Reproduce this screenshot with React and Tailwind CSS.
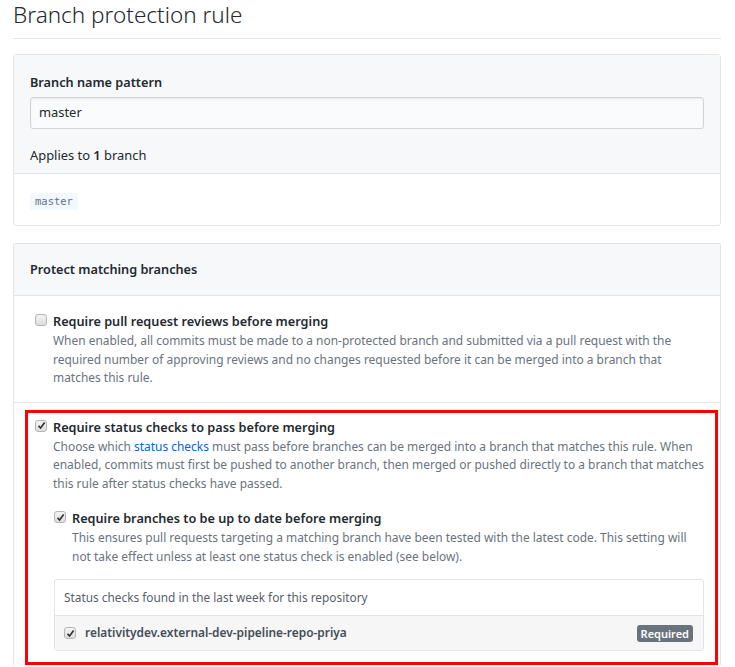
import React from 'react';

const Checkbox = ({ checked }) => (
  <span className="mt-[4px] flex h-[12px] w-[12px] shrink-0 items-center justify-center rounded-[3px] border border-[#b5b5b5] bg-gradient-to-b from-[#f4f4f4] to-[#dedede]">
    {checked && (
      <svg width="9" height="9" viewBox="0 0 9 9">
        <path d="M1.5 4.8 L3.6 7 L7.6 1.6" fill="none" stroke="#333" strokeWidth="1.7" />
      </svg>
    )}
  </span>
);

const Option = ({ checked, title, children, className = '' }) => (
  <div className={`flex gap-[6px] ${className}`}>
    <Checkbox checked={checked} />
    <div className="min-w-0 flex-1">
      <div className="text-[12.7px] leading-[22px] font-semibold text-[#24292e]">{title}</div>
      <p className="text-[11.95px] leading-[18.5px] text-[#6a737d]">{children}</p>
    </div>
  </div>
);

export default function App() {
  return (
    <div className="min-h-screen bg-white pl-[13px] pr-[14px] font-['Segoe_UI','Noto_Sans',sans-serif] text-[#24292e]">
      <h1 className="border-b border-[#e1e4e8] pb-[8px] text-[22.5px] leading-[30px] font-light">
        Branch protection rule
      </h1>

      <div className="mt-[15px] rounded-[3px] border border-[#e1e4e8]">
        <div className="border-b border-[#e1e4e8] bg-[#f6f8fa] px-[16px] pt-[17px] pb-[7px]">
          <div className="text-[12.7px] leading-[21px] font-semibold">Branch name pattern</div>
          <div className="mt-[4px] flex h-[32px] items-center rounded-[3px] border border-[#d1d5da] bg-[#fafbfc] px-[8px] text-[12.9px] shadow-[inset_0_1px_2px_rgba(27,31,35,0.075)]">
            master
          </div>
          <div className="mt-[16px] text-[12.9px] leading-[21px]">
            Applies to <span className="font-semibold">1</span> branch
          </div>
        </div>
        <div className="px-[16px] pt-[19px] pb-[15px]">
          <code className="block w-fit rounded-[3px] bg-[#f1f8ff] px-[5px] font-['DejaVu_Sans_Mono',monospace] text-[10.5px] leading-[17px] text-[#6a737d]">
            master
          </code>
        </div>
      </div>

      <div className="mt-[17px] rounded-t-[3px] border border-b-0 border-[#e1e4e8]">
        <div className="border-b border-[#e1e4e8] bg-[#f6f8fa] px-[16px] py-[15px] text-[12.7px] leading-[21px] font-semibold">
          Protect matching branches
        </div>

        <div className="border-b border-[#e1e4e8] pt-[14px] pr-[16px] pb-[14px] pl-[21px]">
          <Option checked={false} title="Require pull request reviews before merging">
            When enabled, all commits must be made to a non-protected branch and submitted via a pull request with the
            <br />
            required number of approving reviews and no changes requested before it can be merged into a branch that
            <br />
            matches this rule.
          </Option>
        </div>

        <div className="mt-[7px] mr-[2px] ml-[11px] border-[3px] border-[#ff0000] pt-[3px] pr-[11px] pb-[11px] pl-[7px]">
          <Option checked title="Require status checks to pass before merging">
            Choose which <span className="text-[#0366d6]">status checks</span> must pass before branches can be merged
            into a branch that matches this rule. When
            <br />
            enabled, commits must first be pushed to another branch, then merged or pushed directly to a branch that
            matches
            <br />
            this rule after status checks have passed.
          </Option>

          <div className="pl-[19px]">
            <Option checked className="mt-[14px]" title="Require branches to be up to date before merging">
              This ensures pull requests targeting a matching branch have been tested with the latest code. This setting
              will
              <br />
              not take effect unless at least one status check is enabled (see below).
            </Option>

            <div className="mt-[13px] rounded-[3px] border border-[#e1e4e8]">
              <div className="border-b border-[#e1e4e8] px-[9px] py-[7px] text-[11.85px] leading-[21px] text-[#586069]">
                Status checks found in the last week for this repository
              </div>
              <div className="flex h-[34px] items-center bg-[#f6f6f6] pr-[10px] pl-[9px]">
                <span className="-mt-[4px]">
                  <Checkbox checked />
                </span>
                <span className="ml-[9px] flex-1 text-[11.9px] font-semibold text-[#444d56]">
                  relativitydev.external-dev-pipeline-repo-priya
                </span>
                <span className="rounded-[3px] bg-[#6a737d] px-[4px] text-[11px] leading-[17px] font-semibold text-white">
                  Required
                </span>
              </div>
            </div>
          </div>
        </div>
      </div>
    </div>
  );
}
